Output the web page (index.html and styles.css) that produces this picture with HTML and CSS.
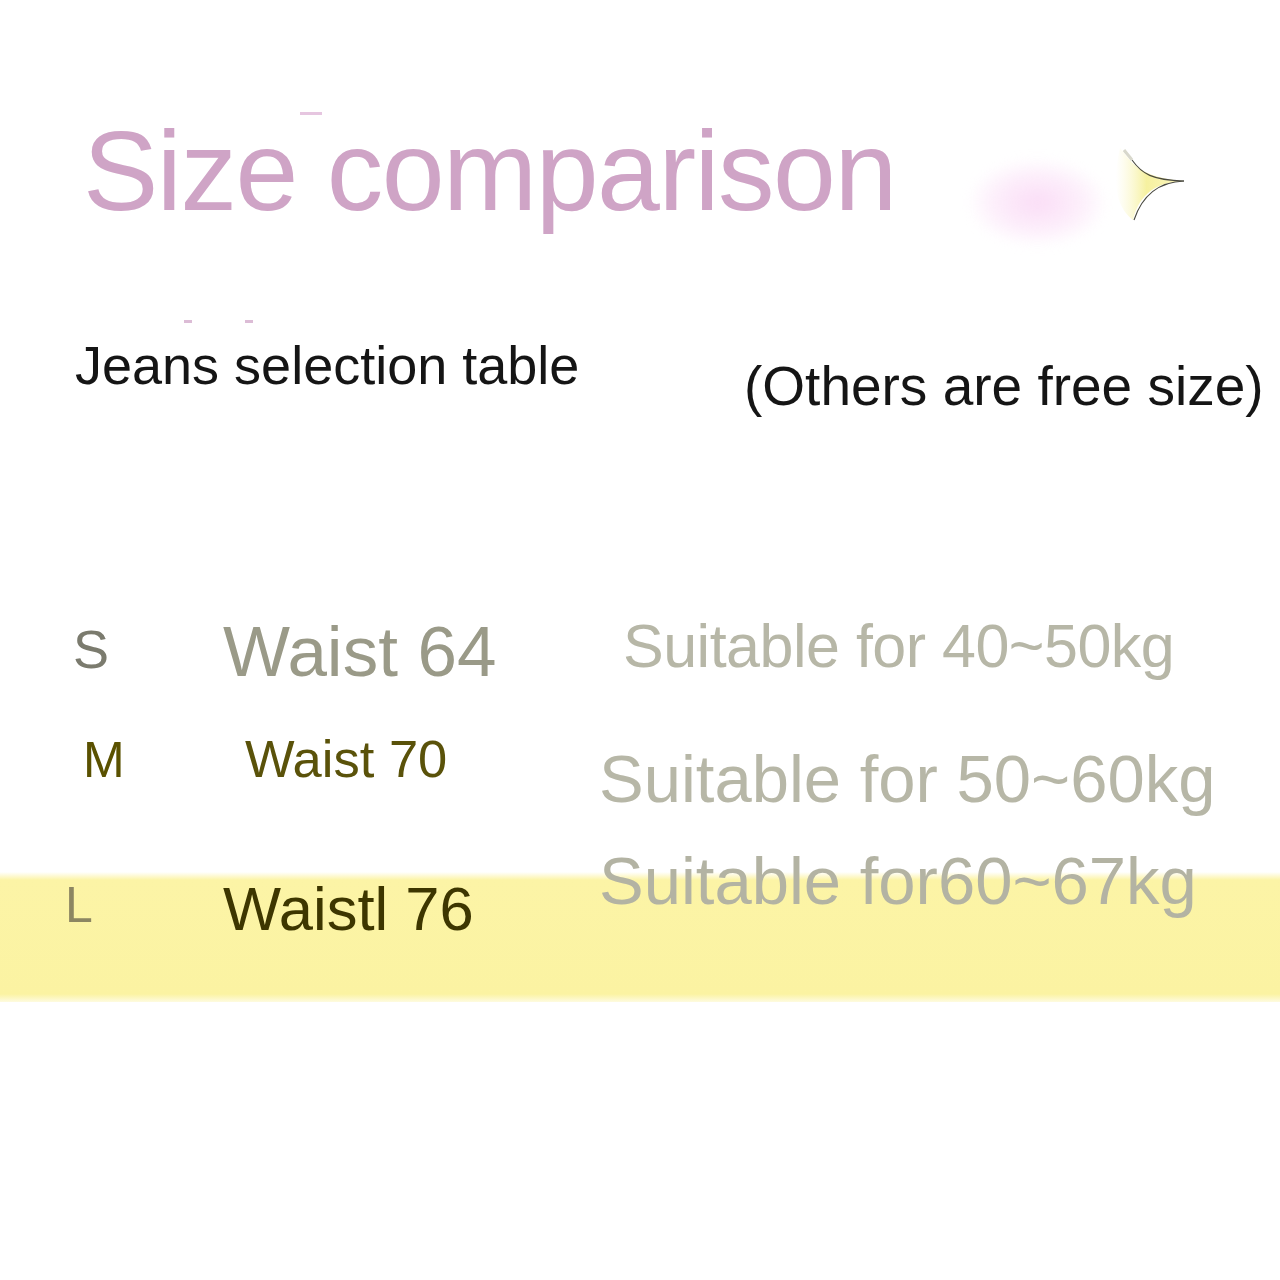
FILE: index.html
```html
<!DOCTYPE html>
<html lang="en">
<head>
<meta charset="utf-8">
<title>Size comparison</title>
<link rel="stylesheet" href="styles.css">
</head>
<body>
<div class="page">
  <header class="head">
    <h1 class="title">Size comparison</h1>
    <div class="blob"></div>
    <svg class="sparkle" width="90" height="100" viewBox="0 0 90 100" aria-hidden="true">
      <defs>
        <linearGradient id="sg" x1="0" y1="0" x2="1" y2="0">
          <stop offset="0" stop-color="#fbf7c8" stop-opacity="0"/>
          <stop offset="0.45" stop-color="#f6f1a0"/>
          <stop offset="1" stop-color="#fbf6c0"/>
        </linearGradient>
      </defs>
      <path d="M20 8 C30 20 38 38 84 41 C50 42 38 60 33 80 C20 70 10 50 20 8 Z" fill="url(#sg)"/>
      <path d="M32 20 C42 34 52 40 84 41" fill="none" stroke="#4a4a40" stroke-width="1.1"/>
      <path d="M84 41 C58 42 42 56 34 80" fill="none" stroke="#4a4a40" stroke-width="1.1"/>
      <path d="M24 10 C27 14 30 17 32 20" fill="none" stroke="#d8d8cc" stroke-width="3"/>
    </svg>
    <span class="mark m1"></span>
    <span class="mark m2"></span>
    <span class="mark m3"></span>
  </header>

  <div class="sub">
    <div class="jeans">Jeans selection table</div>
    <div class="others">(Others are free size)</div>
  </div>

  <div class="row row-s">
    <div class="size s-s">S</div>
    <div class="waist w-s">Waist 64</div>
    <div class="fit f-s">Suitable for 40~50kg</div>
  </div>
  <div class="row row-m">
    <div class="size s-m">M</div>
    <div class="waist w-m">Waist 70</div>
    <div class="fit f-m">Suitable for 50~60kg</div>
  </div>
  <div class="row row-l">
    <div class="size s-l">L</div>
    <div class="waist w-l">Waistl 76</div>
    <div class="fit f-l">Suitable for60~67kg</div>
  </div>
</div>
</body>
</html>
```

FILE: styles.css
```css
html, body {
  margin: 0;
  padding: 0;
  background: #ffffff;
}

body {
  font-family: "Liberation Sans", Arial, sans-serif;
  width: 1280px;
  height: 1280px;
  overflow: hidden;
}

.page {
  padding-top: 115px;
}

.head {
  position: relative;
}

.title {
  margin: 0;
  padding-left: 83px;
  font-size: 113px;
  line-height: 1;
  font-weight: 400;
  letter-spacing: -1.5px;
  color: #cfa4c6;
}

.blob {
  position: absolute;
  left: 970px;
  top: 45px;
  width: 135px;
  height: 85px;
  border-radius: 50%;
  background: radial-gradient(ellipse at center, rgba(248, 206, 242, 0.7) 0%, rgba(250, 218, 246, 0.45) 45%, rgba(255, 255, 255, 0) 75%);
  filter: blur(6px);
}

.sparkle {
  position: absolute;
  left: 1100px;
  top: 25px;
}

.mark {
  position: absolute;
  height: 3px;
  background: #dcbcd6;
}

.m1 { left: 300px; top: -3px; width: 22px; background: #e6c6e0; }
.m2 { left: 184px; top: 205px; width: 8px; }
.m3 { left: 245px; top: 205px; width: 8px; }

.sub {
  display: grid;
  grid-template-columns: 744px 1fr;
  margin-top: 110px;
  color: #151515;
}

.jeans {
  padding-left: 75px;
  font-size: 54px;
  line-height: 1;
}

.others {
  margin-top: 21px;
  font-size: 55px;
  line-height: 1;
  white-space: nowrap;
}

.row {
  display: grid;
  grid-template-columns: 220px 377px 1fr;
  align-items: start;
  line-height: 1;
  white-space: nowrap;
}

.row-s { margin-top: 202px; }
.row-m { margin-top: 47px; }
.row-l {
  margin-top: 36px;
  height: 154px;
  background: linear-gradient(to bottom,
    rgba(252, 244, 166, 0) 0,
    rgba(252, 244, 166, 0) 24px,
    #fcf4a6 32px,
    #fbf3a2 146px,
    rgba(252, 244, 166, 0) 158px);
}

.s-s { padding-left: 73px; margin-top: 6px; font-size: 54px; color: #7b7b6e; }
.w-s { padding-left: 3px; font-size: 71px; color: #9a9a88; }
.f-s { padding-left: 26px; font-size: 61px; letter-spacing: -0.5px; color: #b7b7a7; }

.s-m { padding-left: 83px; margin-top: 1px; font-size: 50px; color: #5a5100; }
.w-m { padding-left: 25px; margin-top: -1px; font-size: 52.5px; color: #5a520a; }
.f-m { padding-left: 2px; margin-top: 11px; font-size: 67px; color: #b7b7a7; }

.s-l { padding-left: 65px; margin-top: 32px; font-size: 50px; color: #8c8662; }
.w-l { padding-left: 3px; margin-top: 30px; font-size: 61.5px; color: #3d3600; }
.f-l { padding-left: 2px; margin-top: -1px; font-size: 67px; color: #b3b3a3; }
```
